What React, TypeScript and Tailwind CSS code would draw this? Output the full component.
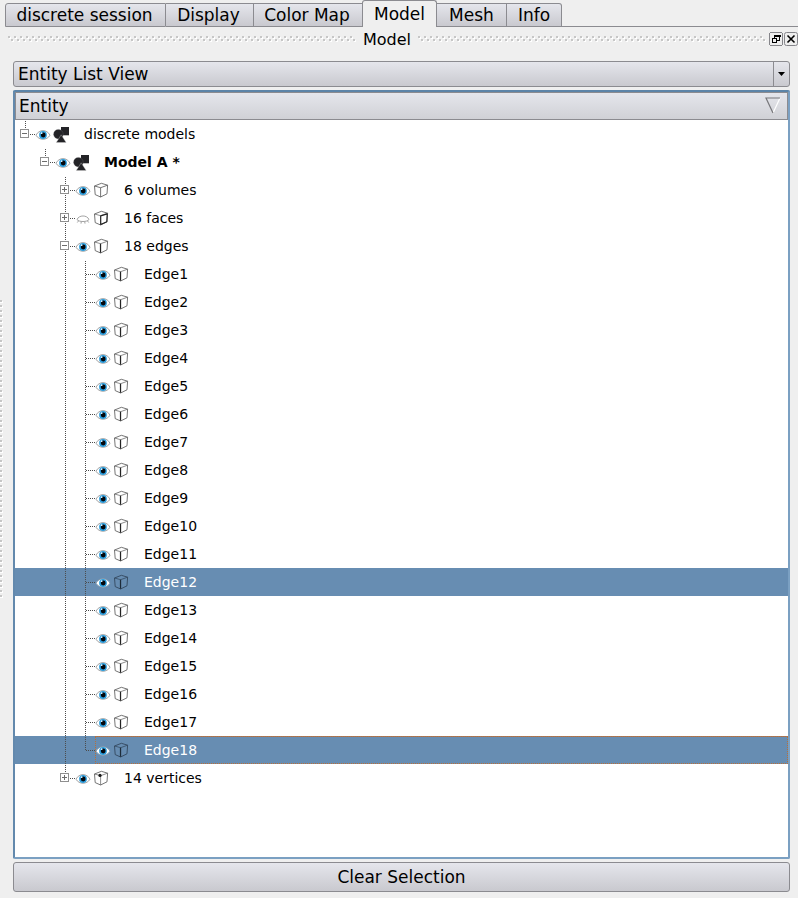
import React from "react";

type Kind = "model" | "volume" | "face" | "edge" | "vertex";
type Guide = "none" | "pass" | "tee" | "last" | "plusTee" | "minusTee" | "minusLast" | "plusLast";

interface Row {
  label: string;
  kind: Kind;
  guides: Guide[];
  bold?: boolean;
  hidden?: boolean;
  selected?: boolean;
  current?: boolean;
}

const rows: Row[] = [
  { label: "discrete models", kind: "model", guides: ["minusLast"] },
  { label: "Model A *", kind: "model", guides: ["none", "minusLast"], bold: true },
  { label: "6 volumes", kind: "volume", guides: ["none", "none", "plusTee"] },
  { label: "16 faces", kind: "face", guides: ["none", "none", "plusTee"], hidden: true },
  { label: "18 edges", kind: "edge", guides: ["none", "none", "minusTee"] },
  ...Array.from({ length: 18 }, (_, i): Row => ({
    label: `Edge${i + 1}`,
    kind: "edge",
    guides: ["none", "none", "pass", i === 17 ? "last" : "tee"],
    selected: i === 11 || i === 17,
    current: i === 17,
  })),
  { label: "14 vertices", kind: "vertex", guides: ["none", "none", "plusLast"] },
];

function GuideCell({ type }: { type: Guide }) {
  const boxed = type.startsWith("plus") || type.startsWith("minus");
  const continues = type === "pass" || type === "tee" || type.endsWith("Tee");
  const dots = { stroke: "#4c4c4c", strokeDasharray: "1 1" };
  return (
    <svg width="20" height="28" viewBox="0 0 20 28" shapeRendering="crispEdges" className="shrink-0">
      {type !== "none" && (
        <>
          <path d={continues && !boxed ? "M10.5 1V28" : boxed ? "M10.5 1V9" : "M10.5 1V15"} {...dots} />
          {boxed && continues && <path d="M10.5 19V28" {...dots} />}
          {type !== "pass" && <path d={boxed ? "M15 14.5H20" : "M11 14.5H20"} {...dots} />}
        </>
      )}
      {boxed && (
        <>
          <rect x="5.5" y="9.5" width="8" height="8" fill="#fff" stroke="#8f8f8f" />
          <path d="M7 13.5H12" stroke="#6c6c6c" />
          {type.startsWith("plus") && <path d="M9.5 11V16" stroke="#6c6c6c" />}
        </>
      )}
    </svg>
  );
}

function Eye({ closed, selected }: { closed?: boolean; selected?: boolean }) {
  return (
    <svg width="16" height="16" viewBox="0 0 16 16" className="mt-px shrink-0">
      {closed ? (
        <g fill="none" stroke="#989898" strokeWidth="0.9">
          <path d="M2 8.5C4 3.8 12 3.8 14 8.5M2 8.5C4 11.2 12 11.2 14 8.5" />
          <path d="M3.5 10L2.3 11.5M6.3 10.6L6 12.6M9.7 10.6L10 12.6M12.5 10L13.7 11.5" />
        </g>
      ) : (
        <>
          <path
            d="M1 8.2C4 2.1 12 2.1 15 8.2C12 13.6 4 13.6 1 8.2Z"
            fill="#fff"
            stroke={selected ? "#8296a8" : "#999"}
            strokeWidth="0.9"
          />
          <circle cx="8" cy="8" r="3.9" fill="#2c9ddc" />
          <circle cx="8.2" cy="8" r="2.4" fill="#04070c" />
          <circle cx="6.6" cy="6.2" r="0.9" fill="#d8f1ff" />
        </>
      )}
    </svg>
  );
}

function EntityIcon({ kind, selected }: { kind: Kind; selected?: boolean }) {
  if (kind === "model") {
    return (
      <svg width="16" height="18" viewBox="0 0 16 18" className="shrink-0" fill="#232327">
        <rect x="8" y="2" width="8" height="8.3" />
        <circle cx="5.4" cy="9.2" r="4.8" stroke="#77777b" strokeWidth="0.3" />
        <path d="M8.2 9.8L13.2 17.6H3.2Z" stroke="#e8e8e8" strokeWidth="0.35" />
      </svg>
    );
  }
  const line = selected ? "#2f4358" : "#5c5c5c";
  const strong = selected ? "#1d2b39" : "#222";
  return (
    <svg width="16" height="16" viewBox="0 0 16 16" className="shrink-0" fill="none" strokeLinejoin="round">
      <path d="M1.5 4L8.4 1.3L14.6 3.2L14 11.8L7.6 15L2.2 12.6Z" stroke={line} strokeWidth="0.85" />
      <path d="M1.5 4L7.6 5.7L14.6 3.2M7.6 5.7V15" stroke={line} strokeWidth={kind === "volume" ? 0.85 : 0.7} />
      {kind === "face" && <path d="M7.7 5.9L14.2 3.9L13.8 11.7L7.7 14.4Z" stroke="#222" strokeWidth="1.1" />}
      {kind === "edge" && <path d="M7.5 5.7V14.6" stroke={strong} strokeWidth="1.2" />}
      {kind === "vertex" && <circle cx="7" cy="5.4" r="1.6" fill="#1a1a1a" />}
    </svg>
  );
}

function TreeRow({ row }: { row: Row }) {
  return (
    <div className={`relative flex h-7 items-center ${row.selected ? "bg-[#678db2] text-white" : "text-black"}`}>
      {row.guides.map((g, i) => (
        <GuideCell key={i} type={g} />
      ))}
      <Eye closed={row.hidden} selected={row.selected} />
      <span className="ml-0.5 flex">
        <EntityIcon kind={row.kind} selected={row.selected} />
      </span>
      <span className={`ml-[15px] text-[14px] leading-7 whitespace-pre ${row.bold ? "font-bold" : ""}`}>{row.label}</span>
      {row.current && (
        <svg className="absolute top-0 left-20 h-7 w-[693px]" viewBox="0 0 693 28" shapeRendering="crispEdges" fill="none">
          <path d="M0 0.5H693" stroke="#96786a" />
          <path d="M0 0.5H693M0.5 1V28M692.5 1V28M0 27.5H693" stroke="#b8703a" strokeDasharray="1 1" />
        </svg>
      )}
    </div>
  );
}

function GripH({ id, className }: { id: string; className: string }) {
  return (
    <svg height="6" className={className} shapeRendering="crispEdges">
      <defs>
        <pattern id={id} width="6" height="6" patternUnits="userSpaceOnUse">
          <path d="M1 1h2v2h-2zM4 4h2v2h-2z" fill="#fff" />
          <path d="M0 0h2v2h-2zM3 3h2v2h-2z" fill="#c6c6c6" />
        </pattern>
      </defs>
      <rect width="100%" height="6" fill={`url(#${id})`} />
    </svg>
  );
}

function GripV() {
  return (
    <svg width="3" height="299" className="mt-[299px] block" shapeRendering="crispEdges">
      <defs>
        <pattern id="grip-side" width="3" height="5" patternUnits="userSpaceOnUse">
          <path d="M0 2h3v2h-3z" fill="#fff" />
          <path d="M0 1h2v2h-2z" fill="#c6c6c6" />
        </pattern>
      </defs>
      <rect width="3" height="299" fill="url(#grip-side)" />
    </svg>
  );
}

const tabs = [
  { label: "discrete session", width: "w-[161px] pr-[2px]" },
  { label: "Display", width: "w-[88px] pr-[2px]" },
  { label: "Color Map", width: "w-[108px] pr-[2px]" },
  { label: "Model", width: "w-[75px]" },
  { label: "Mesh", width: "w-[70px]" },
  { label: "Info", width: "w-[55px]" },
];

function TabBar() {
  return (
    <div className="flex h-[27px] items-end pl-[5px] text-[17px]">
      {tabs.map((t, i) =>
        t.label === "Model" ? (
          <div
            key={t.label}
            className={`h-[27px] shrink-0 rounded-t-[3px] border border-b-0 border-[#8b8b90] bg-[#efefef] text-center leading-[26px] ${t.width}`}
          >
            {t.label}
          </div>
        ) : (
          <div
            key={t.label}
            className={`h-6 shrink-0 border-y border-r border-[#8b8b90] bg-linear-to-b from-[#e5e6ec] to-[#c9c9cf] text-center leading-[22px] ${t.width} ${i === 0 ? "rounded-tl-[3px] border-l" : ""} ${t.label === "Color Map" ? "border-r-0" : ""} ${t.label === "Info" ? "rounded-tr-[3px]" : ""}`}
          >
            {t.label}
          </div>
        ),
      )}
      <div className="h-px flex-1 bg-[#8b8b90]" />
    </div>
  );
}

function TitleBar() {
  return (
    <div className="flex h-[24px] items-center">
      <GripH id="grip-left" className="ml-2 w-[348px]" />
      <div className="w-[62px] pt-0.5 text-center text-[16px] leading-6">Model</div>
      <GripH id="grip-right" className="w-[348px]" />
      <div className="ml-[3px] flex gap-px">
        <svg width="14" height="14" viewBox="0 0 14 14" shapeRendering="crispEdges">
          <rect x=".5" y=".5" width="13" height="13" rx="2" fill="#eee" stroke="#85858a" />
          <path d="M5.5 6V3.5H10.5V8.5H8M5 3h6v1h-6" fill="none" stroke="#000" />
          <path d="M3.5 6.5H7.5V10.5H3.5ZM3 6h5" fill="none" stroke="#000" />
        </svg>
        <svg width="14" height="14" viewBox="0 0 14 14">
          <rect x=".5" y=".5" width="13" height="13" rx="2" fill="#eee" stroke="#85858a" />
          <path d="M3.5 3.5L10.5 10.5M10.5 3.5L3.5 10.5" stroke="#000" strokeWidth="1.6" />
        </svg>
      </div>
    </div>
  );
}

export default function App() {
  return (
    <div className="flex h-[898px] w-[798px] flex-col overflow-hidden bg-[#efefef] font-['DejaVu_Sans',sans-serif] text-black">
      <TabBar />
      <TitleBar />
      <div className="flex flex-1">
        <div className="-mt-[51px] w-[13px] shrink-0">
          <GripV />
        </div>
        <div className="flex w-[777px] flex-col pt-[10px]">
          <div className="flex h-[26px] rounded-[3px] border border-[#8b8b90] bg-linear-to-b from-[#e5e6ec] to-[#c9c9cf]">
            <div className="flex-1 pl-1 text-[17px] leading-6">Entity List View</div>
            <div className="flex w-4 items-center justify-center border-l border-[#8b8b90]">
              <svg width="7" height="4" viewBox="0 0 7 4">
                <path d="M0 0H7L3.5 4Z" fill="#000" />
              </svg>
            </div>
          </div>
          <div className="mt-[3px] flex h-[769px] flex-col rounded-[2px] border-2 border-[#7ba0c2] border-t-[#5c84a8] border-l-[#6389ad] bg-white">
            <div className="flex h-7 shrink-0 items-center justify-between border border-[#8b8b90] bg-linear-to-b from-[#e5e6ec] to-[#d0d1d6] pr-[6px] pl-[3px]">
              <span className="text-[17px] leading-[26px]">Entity</span>
              <svg width="16" height="17" viewBox="0 0 16 17" fill="none" className="mb-0.5">
                <path d="M15 1L8 16" stroke="#fff" strokeWidth="1.2" />
                <path d="M15 1H1L8 16" stroke="#77777b" strokeWidth="1.2" />
              </svg>
            </div>
            {rows.map((r) => (
              <TreeRow key={r.label} row={r} />
            ))}
          </div>
          <button className="mt-[3px] h-[30px] rounded-[3px] border border-[#8b8b90] bg-linear-to-b from-[#e5e6ec] to-[#c9c9cf] text-center text-[17px] leading-7">
            Clear Selection
          </button>
        </div>
      </div>
    </div>
  );
}
